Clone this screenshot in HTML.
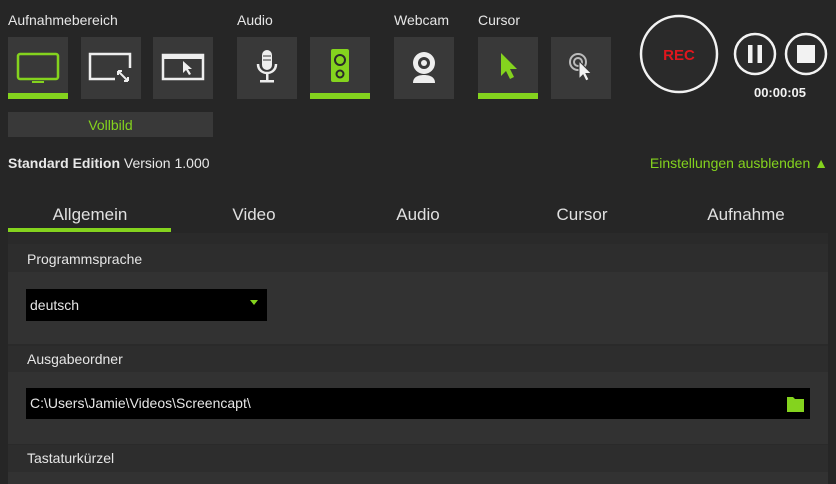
<!DOCTYPE html>
<html><head><meta charset="utf-8"><style>
*{margin:0;padding:0;box-sizing:border-box}
body{width:836px;height:484px;background:#262626;font-family:"Liberation Sans",sans-serif;color:#e8e8e8;position:relative;overflow:hidden}
.a{position:absolute}
.lbl{font-size:14px;color:#e6e6e6;top:12px}
.btn{position:absolute;top:37px;width:60px;height:62px;background:#393939}
.btn svg{position:absolute;left:0;top:0}
.ul{position:absolute;left:0;bottom:0;width:60px;height:6px;background:#84d31e}
.g{color:#84d31e}
.tab{position:absolute;top:205px;font-size:17px;color:#e0e0e0;text-align:center;width:164px}
.hdr{position:absolute;left:8px;width:820px;background:#2d2d2d;font-size:14px;color:#e6e6e6;padding-left:19px}
.cnt{position:absolute;left:8px;width:820px;background:#323232}
</style></head><body>
<div class="a lbl" style="left:8px">Aufnahmebereich</div>
<div class="a lbl" style="left:237px">Audio</div>
<div class="a lbl" style="left:394px">Webcam</div>
<div class="a lbl" style="left:478px">Cursor</div>

<div class="btn" style="left:8px"><svg width="60" height="62"><rect x="10" y="17" width="40" height="25" rx="2" fill="none" stroke="#84d31e" stroke-width="2.5"/><rect x="24" y="44" width="12" height="2" fill="#84d31e"/></svg><div class="ul"></div></div>
<div class="btn" style="left:81px"><svg width="60" height="62"><path d="M34 42H9V17h40v14" fill="none" stroke="#eee" stroke-width="2.5"/><path d="M37 34l10 10M37 34h4M37 34v4M47 44h-4M47 44v-4" stroke="#eee" stroke-width="2" fill="none"/></svg></div>
<div class="btn" style="left:153px"><svg width="60" height="62"><rect x="10" y="18" width="40" height="24" fill="none" stroke="#eee" stroke-width="2.5"/><rect x="10" y="18" width="40" height="4" fill="#eee"/><path d="M30 24l0 12 3-3 3 5 2-1-3-5 4 0z" fill="#eee"/></svg></div>

<div class="btn" style="left:237px"><svg width="60" height="62"><rect x="25" y="13" width="10" height="20" rx="5" fill="#eee"/><path d="M21 27c0 12 18 12 18 0" stroke="#eee" stroke-width="2.5" fill="none"/><rect x="29" y="37" width="2.5" height="7" fill="#eee"/><rect x="23" y="43" width="14" height="2.5" fill="#eee"/><path d="M26 19h8M26 23h8" stroke="#393939" stroke-width="1"/></svg></div>
<div class="btn" style="left:310px"><svg width="60" height="62"><rect x="21" y="12" width="18" height="33" rx="2" fill="#84d31e"/><circle cx="30" cy="23" r="5" fill="none" stroke="#2a2a2a" stroke-width="2"/><circle cx="30" cy="37" r="3.5" fill="none" stroke="#2a2a2a" stroke-width="2"/></svg><div class="ul"></div></div>

<div class="btn" style="left:394px"><svg width="60" height="62"><circle cx="30" cy="26" r="11" fill="#eee"/><circle cx="30" cy="26" r="6" fill="#393939"/><circle cx="30" cy="26" r="3" fill="#eee"/><path d="M19 46c0-6 5-8 11-8s11 2 11 8z" fill="#eee"/></svg></div>

<div class="btn" style="left:478px"><svg width="60" height="62"><path d="M23 16v23l5-5 4 8 4-2-4-8h7z" fill="#84d31e"/></svg><div class="ul"></div></div>
<div class="btn" style="left:551px"><svg width="60" height="62"><circle cx="27" cy="25" r="8" fill="none" stroke="#bbb" stroke-width="2"/><circle cx="27" cy="25" r="4" fill="none" stroke="#bbb" stroke-width="2"/><path d="M28 24v18l4-4 3 6 3-1.5-3-6h5.5z" fill="#f2f2f2" stroke="#393939" stroke-width="1"/></svg></div>

<div class="a" style="left:8px;top:112px;width:205px;height:25px;background:#393939;text-align:center;font-size:14px;line-height:26px;color:#84d31e">Vollbild</div>

<svg class="a" style="left:630px;top:10px" width="206" height="100">
<circle cx="49" cy="44" r="38" fill="#2a2a2a" stroke="#f2f2f2" stroke-width="2.5"/>
<text x="49" y="50" text-anchor="middle" font-family="Liberation Sans" font-weight="bold" font-size="15" fill="#e0161d">REC</text>
<circle cx="125" cy="44" r="20" fill="#2a2a2a" stroke="#f2f2f2" stroke-width="2.5"/>
<rect x="118" y="35" width="4.5" height="18" fill="#f2f2f2"/><rect x="127.5" y="35" width="4.5" height="18" fill="#f2f2f2"/>
<circle cx="176" cy="44" r="20" fill="#2a2a2a" stroke="#f2f2f2" stroke-width="2.5"/>
<rect x="167" y="35" width="18" height="18" fill="#f2f2f2"/>
<text x="150" y="87" text-anchor="middle" font-family="Liberation Sans" font-weight="bold" font-size="13" fill="#f2f2f2">00:00:05</text>
</svg>

<div class="a" style="left:8px;top:155px;font-size:14px"><b>Standard Edition</b> Version 1.000</div>
<div class="a g" style="right:8px;top:155px;font-size:14px">Einstellungen ausblenden ▲</div>

<div class="tab g" style="left:8px">Allgemein</div>
<div class="tab" style="left:172px">Video</div>
<div class="tab" style="left:336px">Audio</div>
<div class="tab" style="left:500px">Cursor</div>
<div class="tab" style="left:664px">Aufnahme</div>
<div class="a" style="left:8px;top:228px;width:163px;height:4px;background:#84d31e"></div>

<div class="a" style="left:8px;top:233px;width:820px;height:251px;background:#2a2a2a"></div>
<div class="hdr" style="top:244px;height:28px;line-height:30px">Programmsprache</div>
<div class="cnt" style="top:272px;height:72px"></div>
<div class="a" style="left:26px;top:289px;width:241px;height:32px;background:#000;font-size:14px;line-height:32px;padding-left:4px;color:#e6e6e6">deutsch</div>
<div class="a" style="left:250px;top:300px;width:0;height:0;border-left:4px solid transparent;border-right:4px solid transparent;border-top:5px solid #84d31e"></div>

<div class="hdr" style="top:346px;height:26px;line-height:26px">Ausgabeordner</div>
<div class="cnt" style="top:372px;height:72px"></div>
<div class="a" style="left:26px;top:388px;width:784px;height:31px;background:#000;font-size:14px;line-height:31px;padding-left:4px;color:#e6e6e6">C:\Users\Jamie\Videos\Screencapt\</div>
<svg class="a" style="left:786px;top:395px" width="20" height="18"><path d="M1 2h6l2 2h9v13H1z" fill="#84d31e"/></svg>

<div class="hdr" style="top:445px;height:27px;line-height:27px">Tastaturkürzel</div>
<div class="cnt" style="top:472px;height:12px"></div>
</body></html>
